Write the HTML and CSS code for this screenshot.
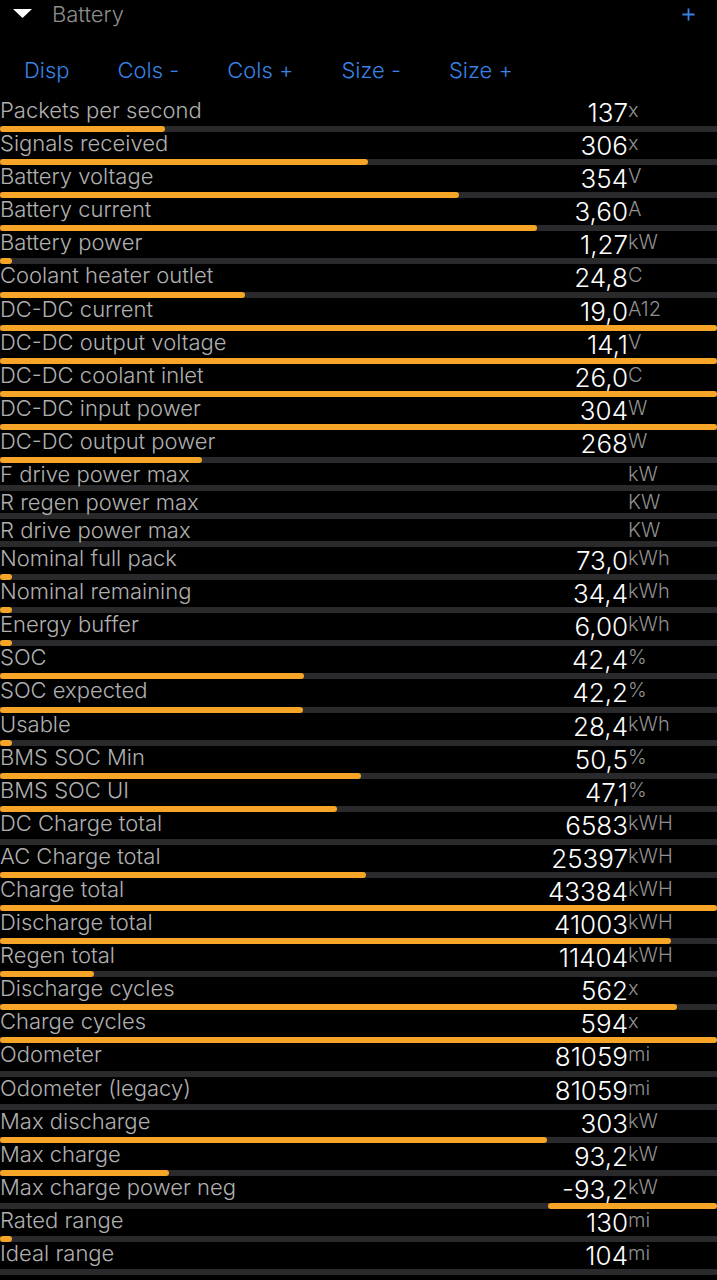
FILE: index.html
```html
<!DOCTYPE html>
<html lang="en">
<head>
    <meta charset="UTF-8">
    <meta name="viewport" content="width=device-width, initial-scale=1.0">
    <title>Battery</title>
    <link rel="stylesheet" href="styles.css">
</head>
<body>
    <div class="header">
        <svg class="caret" width="19" height="9" viewBox="0 0 19 9"><polygon points="0,0 19,0 9.5,9" fill="#fff"/></svg>
        <span class="title">Battery</span>
        <svg class="add" width="13" height="13" viewBox="0 0 13 13"><path d="M6.5 0.5v12M0.5 6.5h12" stroke="#3b82e6" stroke-width="1.8"/></svg>
    </div>

    <div class="toolbar">
        <span class="tool">Disp</span>
        <span class="tool">Cols -</span>
        <span class="tool">Cols +</span>
        <span class="tool">Size -</span>
        <span class="tool">Size +</span>
    </div>

    <div class="list">
        <div class="row"><div class="line"><span class="label">Packets per second</span><span class="value">137</span><span class="unit">x</span></div><div class="track"><div class="fill" style="width: 23%"></div></div></div>
        <div class="row"><div class="line"><span class="label">Signals received</span><span class="value">306</span><span class="unit">x</span></div><div class="track"><div class="fill" style="width: 51.3%"></div></div></div>
        <div class="row"><div class="line"><span class="label">Battery voltage</span><span class="value">354</span><span class="unit">V</span></div><div class="track"><div class="fill" style="width: 64%"></div></div></div>
        <div class="row"><div class="line"><span class="label">Battery current</span><span class="value">3,60</span><span class="unit">A</span></div><div class="track"><div class="fill" style="width: 74.9%"></div></div></div>
        <div class="row"><div class="line"><span class="label">Battery power</span><span class="value">1,27</span><span class="unit">kW</span></div><div class="track"><div class="fill" style="width: 1.7%"></div></div></div>
        <div class="row"><div class="line"><span class="label">Coolant heater outlet</span><span class="value">24,8</span><span class="unit">C</span></div><div class="track"><div class="fill" style="width: 34.2%"></div></div></div>
        <div class="row"><div class="line"><span class="label">DC-DC current</span><span class="value">19,0</span><span class="unit">A12</span></div><div class="track"><div class="fill" style="width: 100%"></div></div></div>
        <div class="row"><div class="line"><span class="label">DC-DC output voltage</span><span class="value">14,1</span><span class="unit">V</span></div><div class="track"><div class="fill" style="width: 100%"></div></div></div>
        <div class="row"><div class="line"><span class="label">DC-DC coolant inlet</span><span class="value">26,0</span><span class="unit">C</span></div><div class="track"><div class="fill" style="width: 100%"></div></div></div>
        <div class="row"><div class="line"><span class="label">DC-DC input power</span><span class="value">304</span><span class="unit">W</span></div><div class="track"><div class="fill" style="width: 100%"></div></div></div>
        <div class="row"><div class="line"><span class="label">DC-DC output power</span><span class="value">268</span><span class="unit">W</span></div><div class="track"><div class="fill" style="width: 28.2%"></div></div></div>
        <div class="row empty"><div class="line"><span class="label">F drive power max</span><span class="value"></span><span class="unit">kW</span></div><div class="track"></div></div>
        <div class="row empty"><div class="line"><span class="label">R regen power max</span><span class="value"></span><span class="unit">KW</span></div><div class="track"></div></div>
        <div class="row empty"><div class="line"><span class="label">R drive power max</span><span class="value"></span><span class="unit">KW</span></div><div class="track"></div></div>
        <div class="row"><div class="line"><span class="label">Nominal full pack</span><span class="value">73,0</span><span class="unit">kWh</span></div><div class="track"><div class="fill" style="width: 1.7%"></div></div></div>
        <div class="row"><div class="line"><span class="label">Nominal remaining</span><span class="value">34,4</span><span class="unit">kWh</span></div><div class="track"><div class="fill" style="width: 1.7%"></div></div></div>
        <div class="row"><div class="line"><span class="label">Energy buffer</span><span class="value">6,00</span><span class="unit">kWh</span></div><div class="track"><div class="fill" style="width: 1.7%"></div></div></div>
        <div class="row"><div class="line"><span class="label">SOC</span><span class="value">42,4</span><span class="unit">%</span></div><div class="track"><div class="fill" style="width: 42.4%"></div></div></div>
        <div class="row"><div class="line"><span class="label">SOC expected</span><span class="value">42,2</span><span class="unit">%</span></div><div class="track"><div class="fill" style="width: 42.2%"></div></div></div>
        <div class="row"><div class="line"><span class="label">Usable</span><span class="value">28,4</span><span class="unit">kWh</span></div><div class="track"><div class="fill" style="width: 1.7%"></div></div></div>
        <div class="row"><div class="line"><span class="label">BMS SOC Min</span><span class="value">50,5</span><span class="unit">%</span></div><div class="track"><div class="fill" style="width: 50.4%"></div></div></div>
        <div class="row"><div class="line"><span class="label">BMS SOC UI</span><span class="value">47,1</span><span class="unit">%</span></div><div class="track"><div class="fill" style="width: 47%"></div></div></div>
        <div class="row"><div class="line"><span class="label">DC Charge total</span><span class="value">6583</span><span class="unit">kWH</span></div><div class="track"></div></div>
        <div class="row"><div class="line"><span class="label">AC Charge total</span><span class="value">25397</span><span class="unit">kWH</span></div><div class="track"><div class="fill" style="width: 51%"></div></div></div>
        <div class="row"><div class="line"><span class="label">Charge total</span><span class="value">43384</span><span class="unit">kWH</span></div><div class="track"><div class="fill" style="width: 100%"></div></div></div>
        <div class="row"><div class="line"><span class="label">Discharge total</span><span class="value">41003</span><span class="unit">kWH</span></div><div class="track"><div class="fill" style="width: 93.6%"></div></div></div>
        <div class="row"><div class="line"><span class="label">Regen total</span><span class="value">11404</span><span class="unit">kWH</span></div><div class="track"><div class="fill" style="width: 13.1%"></div></div></div>
        <div class="row"><div class="line"><span class="label">Discharge cycles</span><span class="value">562</span><span class="unit">x</span></div><div class="track"><div class="fill" style="width: 94.4%"></div></div></div>
        <div class="row"><div class="line"><span class="label">Charge cycles</span><span class="value">594</span><span class="unit">x</span></div><div class="track"><div class="fill" style="width: 100%"></div></div></div>
        <div class="row"><div class="line"><span class="label">Odometer</span><span class="value">81059</span><span class="unit">mi</span></div><div class="track"></div></div>
        <div class="row"><div class="line"><span class="label">Odometer (legacy)</span><span class="value">81059</span><span class="unit">mi</span></div><div class="track"></div></div>
        <div class="row"><div class="line"><span class="label">Max discharge</span><span class="value">303</span><span class="unit">kW</span></div><div class="track"><div class="fill" style="width: 76.3%"></div></div></div>
        <div class="row"><div class="line"><span class="label">Max charge</span><span class="value">93,2</span><span class="unit">kW</span></div><div class="track"><div class="fill" style="width: 23.6%"></div></div></div>
        <div class="row"><div class="line"><span class="label">Max charge power neg</span><span class="value">-93,2</span><span class="unit">kW</span></div><div class="track"><div class="fill neg" style="width: 23.6%"></div></div></div>
        <div class="row"><div class="line"><span class="label">Rated range</span><span class="value">130</span><span class="unit">mi</span></div><div class="track"><div class="fill" style="width: 1.7%"></div></div></div>
        <div class="row"><div class="line"><span class="label">Ideal range</span><span class="value">104</span><span class="unit">mi</span></div><div class="track"></div></div>
    </div>
</body>
</html>
```

FILE: styles.css
```css
body {
    margin: 0;
    background: #000;
    color: #fff;
    font-family: Inter, "Noto Sans", sans-serif;
    width: 717px;
    overflow: hidden;
}
.header {
    display: flex;
    align-items: center;
    height: 28px;
    padding: 0 22px 0 13px;
}
.caret {
    margin-top: -2px;
}
.title {
    margin-left: 20px;
    font-size: 22px;
    font-weight: 300;
    color: #8e8e8e;
}
.add {
    margin-left: auto;
}
.toolbar {
    display: flex;
    gap: 48px;
    padding: 28px 0 15px 24px;
}
.tool {
    font-size: 22px;
    font-weight: 300;
    line-height: 28px;
    color: #3b82e6;
}
.line {
    display: flex;
    align-items: flex-start;
    height: 27.1px;
}
.row.empty .line {
    height: 22px;
}
.label {
    flex: 1;
    font-size: 22px;
    font-weight: 300;
    line-height: 22px;
    color: #b0b0b0;
    white-space: nowrap;
}
.value {
    font-size: 26px;
    font-weight: 300;
    line-height: 27.1px;
    color: #fff;
    text-align: right;
}
.unit {
    width: 89px;
    font-size: 20px;
    font-weight: 300;
    line-height: 22px;
    color: #909090;
}
.track {
    display: flex;
    height: 6px;
    background: #2a2a2c;
}
.fill {
    height: 6px;
    border-radius: 3px;
    background: #f7a526;
}
.fill.neg {
    margin-left: auto;
}
```
